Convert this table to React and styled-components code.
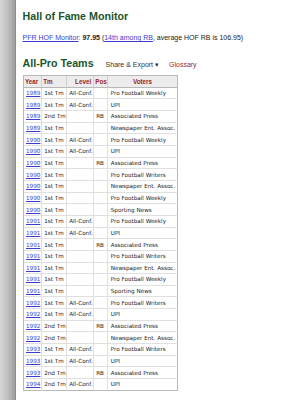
import React from "react";
import { styled, createGlobalStyle } from "styled-components";

const GlobalStyle = createGlobalStyle`
  html, body {
    margin: 0;
    background: #fff;
    font-family: "Liberation Sans", Arial, sans-serif;
  }
`;

const Page = styled.div`
  display: flex;
  height: 400px;
  overflow: hidden;
`;
const Gutter = styled.div`
  width: 16px;
  flex: none;
  background: linear-gradient(to right, #d6d6d6 0%, #bdbdbd 55%, #9c9c9c 100%);
  border-right: 1px solid #8c8c8c;
  box-sizing: border-box;
`;
const Content = styled.div`
  flex: 1;
  padding-left: 6.5px;
  color: #222;
`;
const Heading = styled.h2`
  font-family: "Liberation Sans", Arial, sans-serif;
  font-size: 10.7px;
  line-height: 13px;
  font-weight: 700;
  color: #1b552b;
  margin: ${({ $top }) => $top} 0 0 0;
`;
const Summary = styled.p`
  font-size: 7px;
  line-height: 9px;
  margin: 10px 0 0 0;
  color: #222;
`;
const Link = styled.a`
  color: #3c3ccc;
  text-decoration: underline;
`;
const SectionHead = styled.div`
  display: flex;
  align-items: baseline;
  margin-top: 15px;
`;
const Menu = styled.span`
  font-size: 7px;
  color: #333;
  margin-left: 12px;
`;
const Glossary = styled.span`
  font-size: 7px;
  color: #a02a2a;
  margin-left: 10px;
`;
const Table = styled.div`
  display: grid;
  grid-template-columns: 18.2px 25px 27px 14.6px 69.4px;
  grid-auto-rows: 11.67px;
  width: max-content;
  margin-top: 5px;
  border-top: 1px solid #b8b8b8;
  border-left: 1px solid #b8b8b8;
`;
const Cell = styled.div`
  display: flex;
  align-items: center;
  justify-content: ${({ $align }) => $align || "flex-start"};
  box-sizing: border-box;
  padding: 0 2.5px;
  border-right: 1px solid ${({ $last }) => ($last ? "#b8b8b8" : "#e0e0e0")};
  border-bottom: 1px solid ${({ $bottom }) => ($bottom ? "#b8b8b8" : "#e0e0e0")};
  font-family: "DejaVu Sans", Verdana, sans-serif;
  font-size: 5.65px;
  color: #222;
  white-space: nowrap;
  overflow: hidden;
`;
const HeadCell = styled(Cell)`
  background: #ececec;
  padding: 0 1.5px;
  overflow: visible;
  border-right-color: ${({ $last }) => ($last ? "#b8b8b8" : "#cfcfcf")};
  border-bottom-color: #b8b8b8;
  font-family: "Liberation Sans", Arial, sans-serif;
  font-size: 6.3px;
  font-weight: 700;
  color: #9a1f1f;
`;
const YearLink = styled.a`
  color: #3c3ccc;
  text-decoration: underline;
`;

const rows = [
  ["1989", "1st Tm", "All-Conf.", "", "Pro Football Weekly"],
  ["1989", "1st Tm", "All-Conf.", "", "UPI"],
  ["1989", "2nd Tm", "", "RB", "Associated Press"],
  ["1989", "1st Tm", "", "", "Newspaper Ent. Assoc."],
  ["1990", "1st Tm", "All-Conf.", "", "Pro Football Weekly"],
  ["1990", "1st Tm", "All-Conf.", "", "UPI"],
  ["1990", "1st Tm", "", "RB", "Associated Press"],
  ["1990", "1st Tm", "", "", "Pro Football Writers"],
  ["1990", "1st Tm", "", "", "Newspaper Ent. Assoc."],
  ["1990", "1st Tm", "", "", "Pro Football Weekly"],
  ["1990", "1st Tm", "", "", "Sporting News"],
  ["1991", "1st Tm", "All-Conf.", "", "Pro Football Weekly"],
  ["1991", "1st Tm", "All-Conf.", "", "UPI"],
  ["1991", "1st Tm", "", "RB", "Associated Press"],
  ["1991", "1st Tm", "", "", "Pro Football Writers"],
  ["1991", "1st Tm", "", "", "Newspaper Ent. Assoc."],
  ["1991", "1st Tm", "", "", "Pro Football Weekly"],
  ["1991", "1st Tm", "", "", "Sporting News"],
  ["1992", "1st Tm", "All-Conf.", "", "Pro Football Writers"],
  ["1992", "1st Tm", "All-Conf.", "", "UPI"],
  ["1992", "2nd Tm", "", "RB", "Associated Press"],
  ["1992", "2nd Tm", "", "", "Newspaper Ent. Assoc."],
  ["1993", "1st Tm", "All-Conf.", "", "Pro Football Writers"],
  ["1993", "1st Tm", "All-Conf.", "", "UPI"],
  ["1993", "2nd Tm", "", "RB", "Associated Press"],
  ["1994", "2nd Tm", "All-Conf.", "", "UPI"],
];

const headers = [
  ["Year"],
  ["Tm"],
  ["Level", "flex-end"],
  ["Pos"],
  ["Voters", "center"],
];

const App = () => {
  return (
    <Page>
      <GlobalStyle />
      <Gutter />
      <Content>
        <Heading $top="10px">Hall of Fame Monitor</Heading>
        <Summary>
          <Link>PFR HOF Monitor</Link>: <b>97.95</b> (<Link>14th among RB</Link>, average HOF RB is 106.95)
        </Summary>
        <SectionHead>
          <Heading $top="0">All-Pro Teams</Heading>
          <Menu>Share &amp; Export ▾</Menu>
          <Glossary>Glossary</Glossary>
        </SectionHead>
        <Table role="table">
          {headers.map(([label, align], j) => (
            <HeadCell key={label} $align={align} $last={j === 4}>
              {label}
            </HeadCell>
          ))}
          {rows.map((r, i) =>
            r.map((v, j) => (
              <Cell key={`${i}-${j}`} $last={j === 4} $bottom={i === rows.length - 1}>
                {j === 0 ? <YearLink>{v}</YearLink> : v}
              </Cell>
            ))
          )}
        </Table>
      </Content>
    </Page>
  );
};

export default App;
